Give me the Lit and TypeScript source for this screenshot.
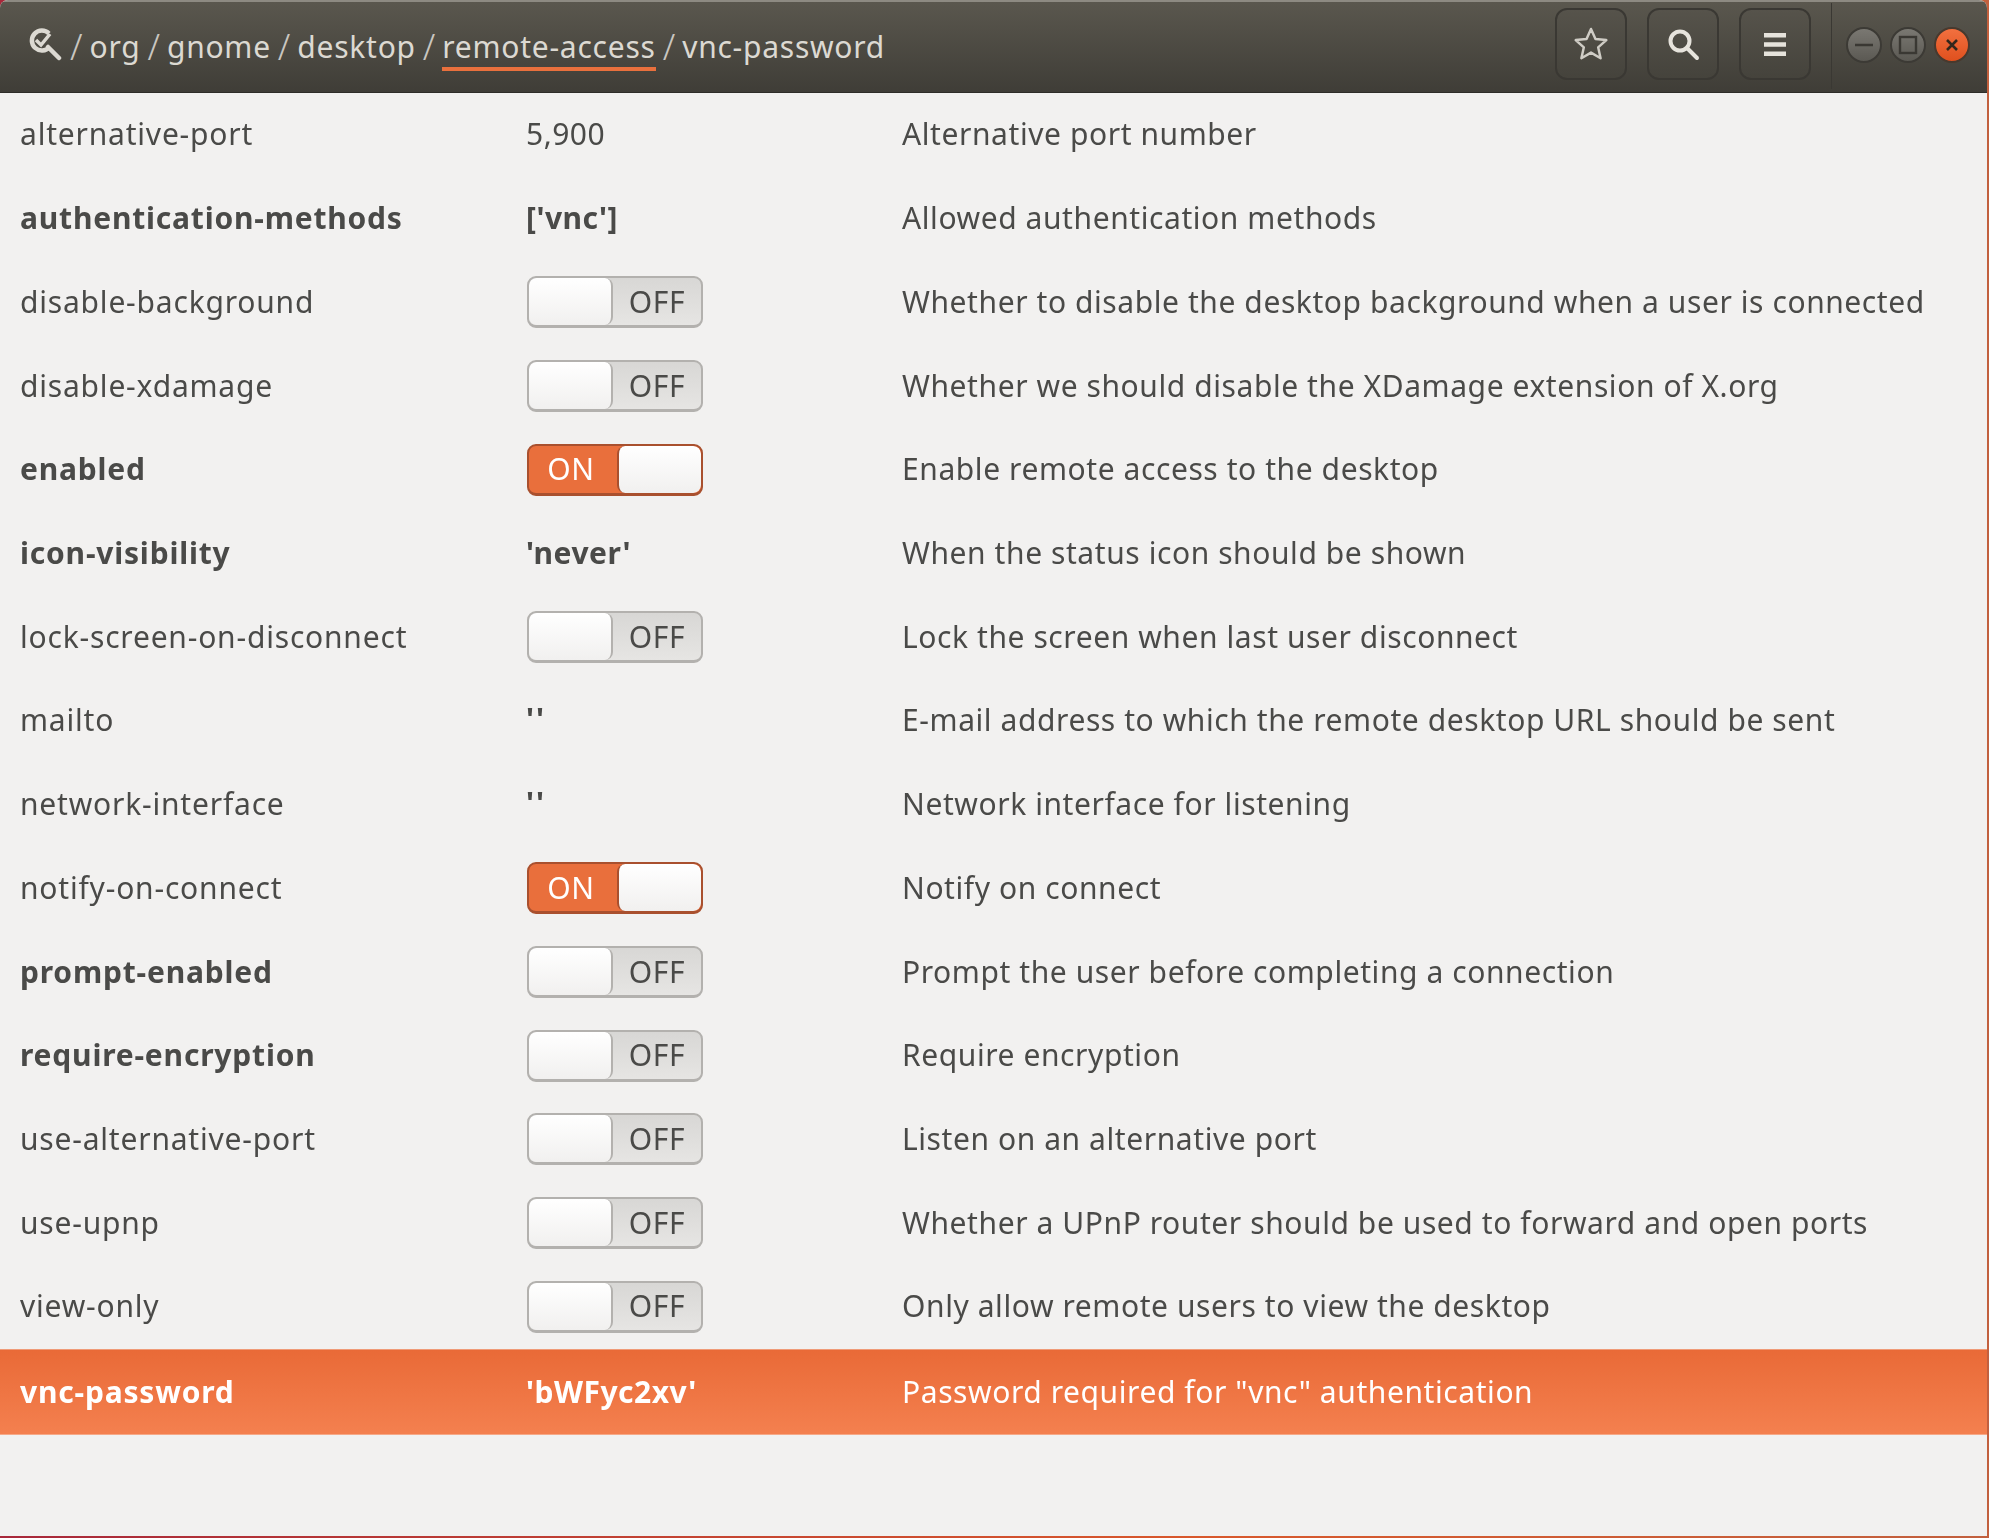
import { LitElement, html, css } from "lit";
import { customElement } from "lit/decorators.js";

type Row = { name: string; bold?: boolean; value?: string; sw?: "on" | "off"; desc: string; sel?: boolean };

const rows: Row[] = [
  { name: "alternative-port", value: "5,900", desc: "Alternative port number" },
  { name: "authentication-methods", bold: true, value: "['vnc']", desc: "Allowed authentication methods" },
  { name: "disable-background", sw: "off", desc: "Whether to disable the desktop background when a user is connected" },
  { name: "disable-xdamage", sw: "off", desc: "Whether we should disable the XDamage extension of X.org" },
  { name: "enabled", bold: true, sw: "on", desc: "Enable remote access to the desktop" },
  { name: "icon-visibility", bold: true, value: "'never'", desc: "When the status icon should be shown" },
  { name: "lock-screen-on-disconnect", sw: "off", desc: "Lock the screen when last user disconnect" },
  { name: "mailto", value: "''", desc: "E-mail address to which the remote desktop URL should be sent" },
  { name: "network-interface", value: "''", desc: "Network interface for listening" },
  { name: "notify-on-connect", sw: "on", desc: "Notify on connect" },
  { name: "prompt-enabled", bold: true, sw: "off", desc: "Prompt the user before completing a connection" },
  { name: "require-encryption", bold: true, sw: "off", desc: "Require encryption" },
  { name: "use-alternative-port", sw: "off", desc: "Listen on an alternative port" },
  { name: "use-upnp", sw: "off", desc: "Whether a UPnP router should be used to forward and open ports" },
  { name: "view-only", sw: "off", desc: "Only allow remote users to view the desktop" },
  { name: "vnc-password", bold: true, value: "'bWFyc2xv'", desc: 'Password required for "vnc" authentication', sel: true },
];

@customElement("app-root")
export class AppRoot extends LitElement {
  static styles = css`
    :host { display: block; width: 1989px; height: 1538px; overflow: hidden;
      background: linear-gradient(to right, #a8283a, #d9582c 60%, #c2603e);
      font-family: "Noto Sans", sans-serif; font-size: 30px; color: #4a4a48; }
    .win { height: 1536px; margin-right: 2px; background: #f2f1f0; border-radius: 8px 8px 0 0; overflow: hidden; display: flex; flex-direction: column; filter: blur(0.5px); }
    .head { height: 93px; flex: none; box-sizing: border-box; border-top: 2px solid #8d8a82; border-bottom: 1px solid #2e2d29; padding: 0 0 6px 28px;
      background: linear-gradient(#5a574e, #3f3d37); display: flex; align-items: center; color: #dcd9d2; letter-spacing: 0.75px; }
    .crumbs { display: flex; align-items: center; gap: 7px; flex: 1; }
    .crumb { position: relative; line-height: 40px; margin-top: 5px; }
    .crumb.cur::after { content: ""; position: absolute; left: 0; right: 0; bottom: -4px; height: 4px; background: #e9703d; }
    .sep { font-weight: 300; font-size: 36px; line-height: 40px; letter-spacing: 0; color: #c9c6c0; margin-top: 5px; }
    .first { margin-left: 1px; }
    .btn { width: 72px; height: 72px; box-sizing: border-box; border: 2px solid #3a3833; border-radius: 12px; margin-right: 20px;
      background: linear-gradient(#56534b, #45433c); display: flex; align-items: center; justify-content: center; }
    .vsep { width: 1px; height: 86px; margin: 4px 14px 0 0; background: #3a3833; }
    .wbtns { display: flex; gap: 8px; margin: 2px 17px 0 0; }
    .wb { width: 36px; height: 36px; border-radius: 50%; box-sizing: border-box; border: 2px solid #3c3a35;
      background: linear-gradient(#7a7872, #5b5953); display: flex; align-items: center; justify-content: center; }
    .wb.close { background: linear-gradient(#f2703f, #e0501e); border-color: #48392e; }
    .list { display: flex; flex-direction: column; flex: 1; }
    .row { height: 83.73px; flex: none; display: grid; grid-template-columns: 506px 376px 1fr; align-items: center; padding-left: 20px; box-sizing: border-box; }
    .nm { letter-spacing: 0.8px; margin-bottom: 2px; }
    .val { letter-spacing: 0.5px; margin-bottom: 2px; }
    .desc { letter-spacing: 0.58px; margin-bottom: 2px; }
    .row.bold .nm, .row.bold .val { font-weight: 700; }
    .row.sel { height: 86px; background: linear-gradient(#e96a37, #f4804f); color: #fff; border-top: 1px solid #f09b78; border-bottom: 1px solid #f6a988; }
    .row.sel > div { margin-bottom: 0; }
    .val.q { font-weight: 700; letter-spacing: 2px; transform: translateY(-1px); }
    .sw { width: 176px; height: 52px; box-sizing: border-box; margin-left: 1px; border: 2px solid #b3b1ae; border-bottom-width: 3px; border-radius: 9px; display: flex; align-items: center; overflow: hidden;
      background: linear-gradient(#d8d7d5, #e6e5e3); letter-spacing: 0.6px; }
    .sw.on { background: #e96f3c; border-color: #a9502e; color: #fff; }
    .label { flex: 1; text-align: center; margin-bottom: 1px; }
    .sw.on .label { padding-right: 4px; }
    .thumb { width: 84px; height: 100%; box-sizing: border-box; border-right: 2px solid #b3b1ae; border-radius: 8px; background: linear-gradient(#fff, #f1f0ef); }
    .sw.on .thumb { border-right: 0; border-left: 2px solid #a9502e; }
  `;

  private sw(state: "on" | "off") {
    return state === "on"
      ? html`<div class="sw on"><span class="label">ON</span><div class="thumb"></div></div>`
      : html`<div class="sw"><div class="thumb"></div><span class="label">OFF</span></div>`;
  }

  render() {
    return html`<div class="win">
      <div class="head">
        <div class="crumbs">
          <svg width="34" height="34" viewBox="0 0 34 34" fill="none" stroke="#dcd9d2">
            <path d="M21 6.500A10 10 0 1 0 21.500 20" stroke-width="4.500" />
            <path d="M20 20l11 11" stroke-width="4.500" stroke-linecap="round" />
            <path d="M8 13l5 5 9-11" stroke-width="3.500" />
          </svg>
          <span class="sep first">/</span><span class="crumb">org</span><span class="sep">/</span><span class="crumb">gnome</span>
          <span class="sep">/</span><span class="crumb">desktop</span><span class="sep">/</span><span class="crumb cur">remote-access</span>
          <span class="sep">/</span><span class="crumb">vnc-password</span>
        </div>
        <div class="btn"><svg width="38" height="38" viewBox="0 0 34 34" fill="none" stroke="#cfccc5" stroke-width="2.200" stroke-linejoin="round"><path d="M17 3.500l4 9 9.700 1-7.300 6.500 2.200 9.700-8.600-5-8.600 5 2.200-9.700-7.300-6.500 9.700-1z"/></svg></div>
        <div class="btn"><svg width="34" height="34" viewBox="0 0 34 34" fill="none" stroke="#e6e3dc" stroke-width="4"><circle cx="14" cy="14" r="9.500"/><path d="M21 21l10 10" stroke-linecap="round"/></svg></div>
        <div class="btn"><svg width="22" height="23" viewBox="0 0 22 23" fill="#e6e3dc"><rect y="0" width="22" height="4.500"/><rect y="9.250" width="22" height="4.500"/><rect y="18.500" width="22" height="4.500"/></svg></div>
        <div class="vsep"></div>
        <div class="wbtns">
          <div class="wb"><svg width="20" height="20" viewBox="0 0 20 20"><path d="M1 10h18" stroke="#3a3833" stroke-width="2.400"/></svg></div>
          <div class="wb"><svg width="20" height="20" viewBox="0 0 20 20"><rect x="2" y="2" width="16" height="16" fill="none" stroke="#3a3833" stroke-width="2.400"/></svg></div>
          <div class="wb close"><svg width="16" height="16" viewBox="0 0 16 16"><path d="M3 3l10 10M13 3L3 13" stroke="#33261c" stroke-width="2.600"/></svg></div>
        </div>
      </div>
      <div class="list">
        ${rows.map((r) => html`<div class="row ${r.bold ? "bold" : ""} ${r.sel ? "sel" : ""}">
          <div class="nm">${r.name}</div>
          ${r.sw ? html`<div>${this.sw(r.sw)}</div>` : html`<div class="val ${r.value === "''" ? "q" : ""}">${r.value}</div>`}
          <div class="desc">${r.desc}</div>
        </div>`)}
      </div>
    </div>`;
  }
}
